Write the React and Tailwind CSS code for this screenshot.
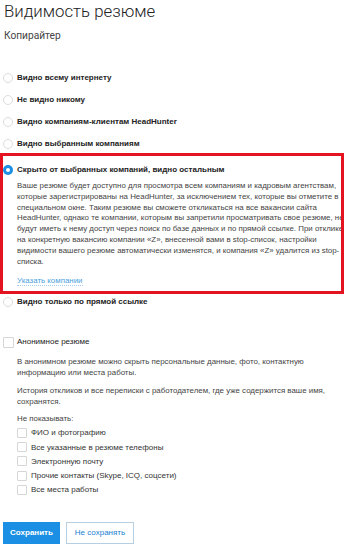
import React from "react";

const Radio = ({ checked }) =>
  checked ? (
    <span className="w-[10px] h-[10px] rounded-full bg-[#1a8fe3] flex items-center justify-center shrink-0">
      <span className="w-[4px] h-[4px] rounded-full bg-white" />
    </span>
  ) : (
    <span className="w-[10px] h-[10px] rounded-full border border-[#dcdcdc] bg-white shrink-0" />
  );

const RadioRow = ({ label, checked, className = "" }) => (
  <div className={`flex items-center h-[22px] ${className}`}>
    <div className="w-[14px] flex">
      <Radio checked={checked} />
    </div>
    <span className="font-bold text-[8px] text-[#222]">{label}</span>
  </div>
);

const Check = ({ size = "w-[10px] h-[10px]" }) => (
  <span className={`${size} border border-[#d6d6d6] bg-white rounded-[1px] shrink-0`} />
);

const boxText = [
  "Ваше резюме будет доступно для просмотра всем компаниям и кадровым агентствам,",
  "которые зарегистрированы на HeadHunter, за исключением тех, которые вы отметите в",
  "специальном окне. Таким резюме вы сможете откликаться на все вакансии сайта",
  "HeadHunter, однако те компании, которым вы запретили просматривать свое резюме, не",
  "будут иметь к нему доступ через поиск по базе данных и по прямой ссылке. При отклике",
  "на конкретную вакансию компании «Z», внесенной вами в stop-список, настройки",
  "видимости вашего резюме автоматически изменятся, и компания «Z» удалится из stop-",
  "списка.",
];

const hidden = [
  "ФИО и фотографию",
  "Все указанные в резюме телефоны",
  "Электронную почту",
  "Прочие контакты (Skype, ICQ, соцсети)",
  "Все места работы",
];

export default function App() {
  return (
    <div className="relative w-[348px] h-[550px] overflow-hidden bg-white px-[3px] font-['Liberation_Sans',Arial,sans-serif] text-[#333]">
      <h1 className="font-['Roboto',sans-serif] font-light text-[16.8px] leading-[22px] text-[#222] pl-[1px]">
        Видимость резюме
      </h1>
      <div className="font-['Roboto',sans-serif] text-[10.2px] leading-[14px] mt-[7px] pl-[1px] text-[#444]">
        Копирайтер
      </div>

      <div className="mt-[24px]">
        <RadioRow label="Видно всему интернету" />
        <RadioRow label="Не видно никому" />
        <RadioRow label="Видно компаниям-клиентам HeadHunter" />
        <RadioRow label="Видно выбранным компаниям" />
        <RadioRow label="Скрыто от выбранных компаний, видно остальным" checked className="mt-[4px]" />
        <div className="pl-[14px] text-[7.9px] leading-[10.8px] text-[#444] whitespace-nowrap">
          {boxText.map((line) => (
            <div key={line}>{line}</div>
          ))}
        </div>
        <div className="pl-[14px] mt-[8px] text-[7.9px] leading-[12px]">
          <span className="text-[#4a9fe0] border-b border-dotted border-[#a9cdee]">Указать компании</span>
        </div>
        <RadioRow label="Видно только по прямой ссылке" className="mt-[4px]" />
      </div>

      <div className="mt-[21px] flex items-center h-[16px]">
        <div className="w-[14px] flex">
          <Check size="w-[11px] h-[11px]" />
        </div>
        <span className="text-[8px] text-[#222]">Анонимное резюме</span>
      </div>
      <div className="pl-[14px] text-[7.9px] leading-[11px] text-[#444] whitespace-nowrap">
        <p className="mt-[6px]">
          В анонимном резюме можно скрыть персональные данные, фото, контактную
          <br />
          информацию или места работы.
        </p>
        <p className="mt-[7px]">
          История откликов и все переписки с работодателем, где уже содержится ваше имя,
          <br />
          сохранятся.
        </p>
        <p className="mt-[6px]">Не показывать:</p>
        <div className="mt-[1.5px] text-[8px] text-[#333]">
          {hidden.map((item) => (
            <div key={item} className="flex items-center h-[14.2px]">
              <div className="w-[14px] flex">
                <Check />
              </div>
              <span>{item}</span>
            </div>
          ))}
        </div>
      </div>

      <div className="mt-[25px] flex gap-[6px] text-[8px]">
        <button className="w-[57px] h-[22px] bg-[#1a8fe3] text-white font-bold">Сохранить</button>
        <button className="w-[68px] h-[22px] border border-[#b7cfe2] bg-white text-[#1a7fd0]">
          Не сохранять
        </button>
      </div>

      <div className="absolute left-0 top-[153px] w-[344px] h-[141px] border-[3px] border-[#e3141f] pointer-events-none" />
    </div>
  );
}
